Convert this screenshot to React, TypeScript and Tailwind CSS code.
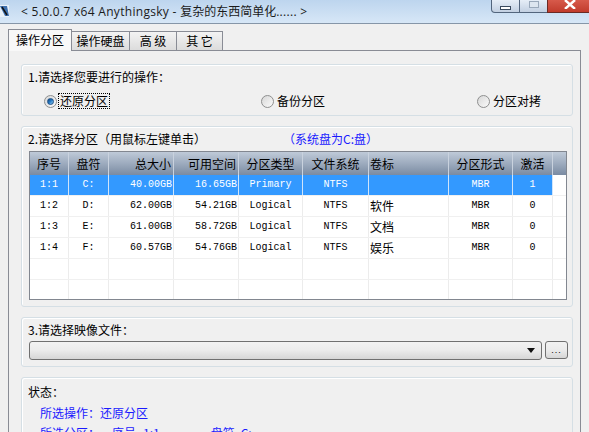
import React from "react";

const rows: string[][] = [
  ["1:1", "C:", "40.00GB", "16.65GB", "Primary", "NTFS", "", "MBR", "1"],
  ["1:2", "D:", "62.00GB", "54.21GB", "Logical", "NTFS", "软件", "MBR", "0"],
  ["1:3", "E:", "61.00GB", "58.72GB", "Logical", "NTFS", "文档", "MBR", "0"],
  ["1:4", "F:", "60.57GB", "54.76GB", "Logical", "NTFS", "娱乐", "MBR", "0"],
  ["", "", "", "", "", "", "", "", ""],
  ["", "", "", "", "", "", "", "", ""],
];

const headers = ["序号", "盘符", "总大小", "可用空间", "分区类型", "文件系统", "卷标", "分区形式", "激活", ""];
const hAlign = [
  "justify-center",
  "justify-center",
  "justify-end pr-[2px]",
  "justify-end pr-[2px]",
  "justify-center",
  "justify-center",
  "justify-start pl-[1px]",
  "justify-center",
  "justify-center",
  "",
];
const dAlign = [
  "justify-center",
  "justify-center",
  "justify-end pr-[1px]",
  "justify-end pr-[1px]",
  "justify-center",
  "justify-center",
  "justify-start pl-[1px]",
  "justify-center",
  "justify-center",
  "",
];

function Radio({ checked }: { checked?: boolean }) {
  return (
    <div className="w-[13px] h-[13px] rounded-full border border-[#8e8f8f] bg-gradient-to-br from-[#d8d8d8] to-[#fafafa] flex items-center justify-center shrink-0">
      {checked && (
        <div className="w-[7px] h-[7px] rounded-full bg-gradient-to-br from-[#0f3f78] via-[#2a7fc8] to-[#8fd0f5] border border-[#1d4f86]" />
      )}
    </div>
  );
}

export default function App() {
  return (
    <div className="w-[589px] h-[432px] overflow-hidden bg-[#f0f0f0] font-['Liberation_Sans','Noto_Sans_CJK_SC',sans-serif] text-[12px] text-black leading-none flex flex-col">
      {/* Title bar */}
      <div className="h-[24px] shrink-0 flex items-start bg-gradient-to-b from-[#bdd5ee] to-[#d7e7f7] border-b border-[#8696a8]">
        <div className="w-[11px] h-[20px] mt-[1px] flex items-center shrink-0">
          <svg width="11" height="18" viewBox="0 0 11 18">
            <rect x="0" y="3" width="9" height="12" fill="#e8f0f8" />
            <path d="M0 4 L7 4 L9 14 L5 14 Z" fill="#3d6fae" />
            <path d="M2 5 L7 13" stroke="#111" strokeWidth="1.5" />
          </svg>
        </div>
        <div className="ml-[10px] h-[23px] flex items-center text-[12px] text-[#1b1b1b] font-['Open_Sans','Noto_Sans_CJK_SC',sans-serif] whitespace-pre">
          <span>
            <span className="tracking-[0.3px]">{"< 5.0.0.7 x64 Anythingsky - "}</span>
            <span>复杂的东西简单化</span>
            <span className="tracking-[0.3px]">{"...... >"}</span>
          </span>
        </div>
        <div className="ml-auto flex h-[13px] shrink-0">
          <div className="w-[29px] h-[13px] rounded-bl-[4px] border border-t-0 border-[#52657d] bg-gradient-to-b from-[#e6eef7] to-[#c2d0e2] flex items-center justify-center">
            <div className="w-[11px] h-[4px] mt-[3px] bg-white border border-[#3a4a5e]" />
          </div>
          <div className="w-[27px] h-[13px] border-b border-[#52657d] bg-gradient-to-b from-[#e6eef7] to-[#c2d0e2] flex items-start justify-center">
            <div className="w-[10px] h-[7px] mt-[1px] border border-[#9aa9bb] bg-[#dde6f0]" />
          </div>
          <div className="w-[42px] h-[13px] border-l border-b border-[#6b2a24] bg-gradient-to-b from-[#d75a4b] to-[#c13b2c] flex items-start pl-[15px]">
            <svg width="14" height="9" viewBox="0 0 14 9">
              <path d="M2 0 L12 9 M12 0 L2 9" stroke="#fff" strokeWidth="2.4" />
            </svg>
          </div>
        </div>
      </div>

      {/* Tabs */}
      <div className="mt-[5px] pl-[8px] h-[21px] flex items-end shrink-0 text-[12px] font-['Noto_Sans_CJK_SC',sans-serif]">
        <div className="w-[64px] h-[22px] border border-b-0 border-[#898c95] bg-[#f8f8f8] flex items-center justify-center pb-[1px] relative z-10 mb-[-1px]">
          操作分区
        </div>
        <div className="w-[58px] h-[19px] border border-l-0 border-b-0 border-[#898c95] bg-gradient-to-b from-[#f3f3f3] to-[#dcdcdc] flex items-center justify-center">
          操作硬盘
        </div>
        <div className="w-[47px] h-[19px] border border-l-0 border-b-0 border-[#898c95] bg-gradient-to-b from-[#f3f3f3] to-[#dcdcdc] flex items-center justify-center">
          高&nbsp;级
        </div>
        <div className="w-[46px] h-[19px] border border-l-0 border-b-0 border-[#898c95] bg-gradient-to-b from-[#f3f3f3] to-[#dcdcdc] flex items-center justify-center">
          其&nbsp;它
        </div>
      </div>

      {/* Panel */}
      <div className="ml-[8px] w-[573px] h-[400px] shrink-0 border border-[#898c95] bg-[#f0f0f0] pt-[13px] pl-[12px] flex flex-col gap-[10px] font-['Noto_Sans_CJK_SC',sans-serif]">
        {/* Group 1 */}
        <div className="w-[552px] h-[52px] shrink-0 rounded-[3px] border border-[#d5dfe5] shadow-[inset_1px_1px_0_#ffffff] flex flex-col">
          <div className="h-[24px] pl-[6px] flex items-center">1.请选择您要进行的操作：</div>
          <div className="h-[24px] flex items-center pl-[22px]">
            <div className="w-[217px] flex items-center">
              <Radio checked />
              <span className="ml-[2px] px-[1px] py-[1px] outline outline-1 outline-dotted outline-black">还原分区</span>
            </div>
            <div className="w-[216px] flex items-center">
              <Radio />
              <span className="ml-[3px]">备份分区</span>
            </div>
            <div className="flex items-center">
              <Radio />
              <span className="ml-[3px]">分区对拷</span>
            </div>
          </div>
        </div>

        {/* Group 2 */}
        <div className="w-[552px] h-[181px] shrink-0 rounded-[3px] border border-[#d5dfe5] shadow-[inset_1px_1px_0_#ffffff] flex flex-col">
          <div className="h-[24px] pl-[6px] flex items-center">
            <span className="w-[255px]">2.请选择分区（用鼠标左键单击）</span>
            <span className="text-[#1a1aff]">（系统盘为C:盘）</span>
          </div>
          <div className="ml-[7px] w-[538px] h-[149px] border border-[#828790] bg-white overflow-hidden">
            <div className="grid grid-cols-[39px_40px_65px_65px_64px_66px_80px_64px_40px_1fr] h-[23px] bg-gradient-to-b from-[#bfcad8] via-[#9dabbe] to-[#7a8ba2]">
              {headers.map((h, i) => (
                <div
                  key={i}
                  className={`flex items-center ${hAlign[i]} ${i < 9 ? "border-r border-[#c9d2de]" : ""} text-[12px] text-black`}
                >
                  {h}
                </div>
              ))}
            </div>
            {rows.map((r, ri) => (
              <div
                key={ri}
                className={`grid grid-cols-[39px_40px_65px_65px_64px_66px_80px_64px_40px_1fr] h-[21px] border-b border-[#f0f0f0] ${
                  ri === 0 ? "bg-[#3399ff] text-white" : "bg-white text-black"
                }`}
              >
                {[...r, ""].map((c, ci) => (
                  <div
                    key={ci}
                    className={`flex items-center ${dAlign[ci]} ${
                      ci < 9 ? (ri === 0 ? "border-r border-[#cfe4fa]" : "border-r border-[#ececec]") : ri === 0 ? "bg-white" : ""
                    } ${ci === 6 ? "text-[12px] font-['Noto_Sans_CJK_SC',sans-serif]" : "text-[10px] font-['Liberation_Mono',monospace]"}`}
                  >
                    {c}
                  </div>
                ))}
              </div>
            ))}
            <div className="grid grid-cols-[39px_40px_65px_65px_64px_66px_80px_64px_40px_1fr] h-[21px]">
              {Array.from({ length: 10 }).map((_, ci) => (
                <div key={ci} className={ci < 9 ? "border-r border-[#ececec]" : ""} />
              ))}
            </div>
          </div>
        </div>

        {/* Group 3 */}
        <div className="w-[552px] h-[50px] shrink-0 rounded-[3px] border border-[#d5dfe5] shadow-[inset_1px_1px_0_#ffffff] flex flex-col">
          <div className="h-[23px] pl-[6px] flex items-center">3.请选择映像文件：</div>
          <div className="flex items-start pl-[7px]">
            <div className="w-[513px] h-[19px] rounded-[3px] border border-[#707070] bg-gradient-to-b from-[#f2f2f2] via-[#ebebeb] to-[#d6d6d6] flex items-center justify-end pr-[6px]">
              <svg width="8" height="5" viewBox="0 0 8 5">
                <path d="M0 0 L8 0 L4 5 Z" fill="#111" />
              </svg>
            </div>
            <div className="ml-[3px] w-[23px] h-[18px] rounded-[3px] border border-[#707070] bg-gradient-to-b from-[#f2f2f2] via-[#ebebeb] to-[#d6d6d6] flex items-end justify-center pb-[3px] text-[9px] tracking-[1px] font-['Liberation_Sans',sans-serif]">
              ...
            </div>
          </div>
        </div>

        {/* Status */}
        <div className="w-[552px] h-[80px] shrink-0 rounded-[3px] border border-[#d5dfe5] shadow-[inset_1px_1px_0_#ffffff] flex flex-col">
          <div className="h-[25px] pl-[6px] flex items-center pt-[2px]">状态：</div>
          <div className="h-[20px] pl-[18px] flex items-center text-[#1a1aff]">所选操作：还原分区</div>
          <div className="h-[20px] pl-[18px] flex items-center text-[#1a1aff]">
            <span className="w-[72px]">所选分区：</span>
            <span>序号</span>
            <span className="ml-[7px]">1:1</span>
            <span className="ml-[51px]">盘符</span>
            <span className="ml-[6px]">C:</span>
          </div>
        </div>
      </div>
    </div>
  );
}
